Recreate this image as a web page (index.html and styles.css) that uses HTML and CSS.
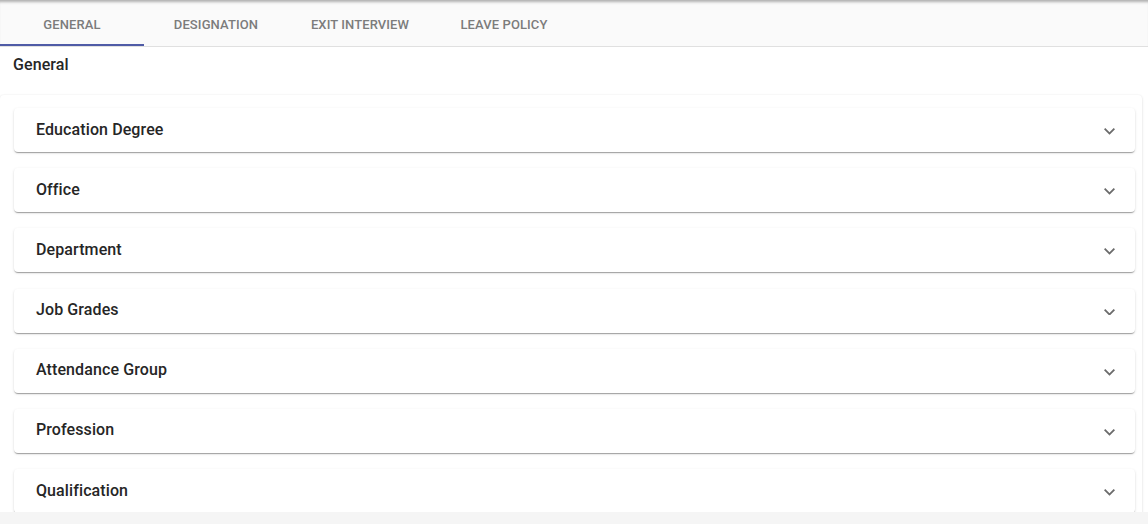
FILE: index.html
```html
<!DOCTYPE html>
<html lang="en">
<head>
<meta charset="utf-8">
<title>Settings</title>
<link rel="stylesheet" href="styles.css">
</head>
<body>
<div class="page">
  <nav class="tabs">
    <div class="tab active">General</div>
    <div class="tab">Designation</div>
    <div class="tab">Exit Interview</div>
    <div class="tab">Leave Policy</div>
  </nav>
  <div class="section-title">General</div>
  <div class="card">
    <div class="panel"><span class="panel-title">Education Degree</span><svg class="chev" viewBox="6 8.59 12 7.41"><path d="M16.59 8.59L12 13.17 7.41 8.59 6 10l6 6 6-6z"/></svg></div>
    <div class="panel"><span class="panel-title">Office</span><svg class="chev" viewBox="6 8.59 12 7.41"><path d="M16.59 8.59L12 13.17 7.41 8.59 6 10l6 6 6-6z"/></svg></div>
    <div class="panel"><span class="panel-title">Department</span><svg class="chev" viewBox="6 8.59 12 7.41"><path d="M16.59 8.59L12 13.17 7.41 8.59 6 10l6 6 6-6z"/></svg></div>
    <div class="panel"><span class="panel-title">Job Grades</span><svg class="chev" viewBox="6 8.59 12 7.41"><path d="M16.59 8.59L12 13.17 7.41 8.59 6 10l6 6 6-6z"/></svg></div>
    <div class="panel"><span class="panel-title">Attendance Group</span><svg class="chev" viewBox="6 8.59 12 7.41"><path d="M16.59 8.59L12 13.17 7.41 8.59 6 10l6 6 6-6z"/></svg></div>
    <div class="panel"><span class="panel-title">Profession</span><svg class="chev" viewBox="6 8.59 12 7.41"><path d="M16.59 8.59L12 13.17 7.41 8.59 6 10l6 6 6-6z"/></svg></div>
    <div class="panel"><span class="panel-title">Qualification</span><svg class="chev" viewBox="6 8.59 12 7.41"><path d="M16.59 8.59L12 13.17 7.41 8.59 6 10l6 6 6-6z"/></svg></div>
  </div>
</div>
</body>
</html>
```

FILE: styles.css
```css
* { box-sizing: border-box; }
html, body { margin: 0; padding: 0; }
body {
  background: #f5f5f5;
  font-family: Roboto, "Liberation Sans", sans-serif;
  color: #212121;
}
.page {
  height: 512px;
  overflow: hidden;
  background: #ffffff;
  display: flex;
  flex-direction: column;
}
.tabs {
  display: flex;
  height: 47px;
  flex-shrink: 0;
  background: #fafafa;
  border-bottom: 1px solid #e0e0e0;
  box-shadow: inset 0 4px 3px -2px rgba(0,0,0,0.3);
}
.tab {
  width: 144px;
  display: flex;
  align-items: center;
  justify-content: center;
  padding-top: 5px;
  font-size: 13px;
  font-weight: 500;
  letter-spacing: 0.1px;
  text-transform: uppercase;
  color: #7c7c7c;
  border-bottom: 2px solid transparent;
}
.tab.active { border-bottom-color: #4f5ba6; }
.section-title {
  height: 48px;
  flex-shrink: 0;
  padding: 8px 13px 0;
  font-size: 16px;
  font-weight: 500;
  letter-spacing: 0.1px;
  color: #262626;
}
.card {
  width: 1142px;
  flex-shrink: 0;
  background: #ffffff;
  border-radius: 4px;
  box-shadow: 0 1px 3px rgba(0,0,0,0.12), 0 0 2px rgba(0,0,0,0.06);
  padding: 13px 7px 20px 14px;
  display: flex;
  flex-direction: column;
  gap: 16.2px;
}
.panel {
  height: 44px;
  background: #ffffff;
  border-radius: 4px;
  box-shadow: 0 2px 1px -1px rgba(0,0,0,0.2), 0 1px 1px 0 rgba(0,0,0,0.14), 0 1px 3px 0 rgba(0,0,0,0.12);
  display: flex;
  align-items: center;
  justify-content: space-between;
  padding: 0 20px 2px 22px;
}
.panel-title {
  font-size: 16px;
  font-weight: 500;
  letter-spacing: 0.1px;
  color: #262626;
}
.chev {
  width: 11px;
  height: 6.8px;
  margin-top: 5px;
  fill: #6b6b6b;
}
```
